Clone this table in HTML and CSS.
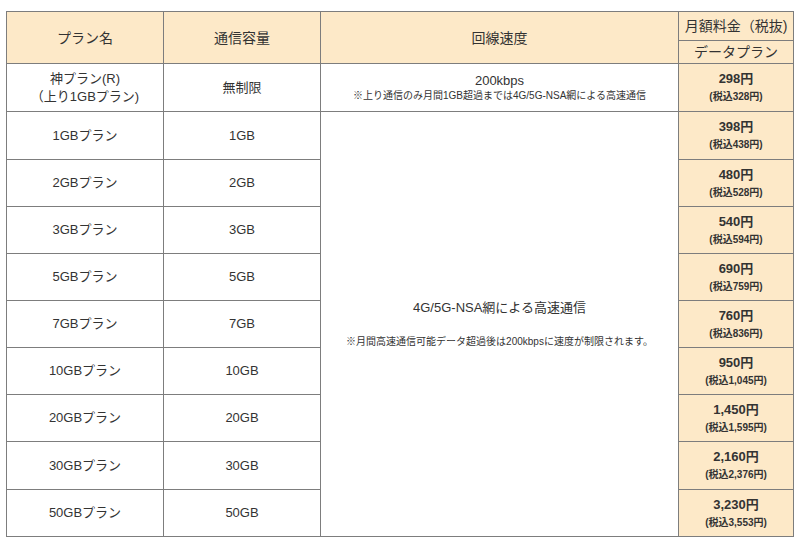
FILE: index.html
```html
<!DOCTYPE html>
<html lang="ja">
<head>
<meta charset="utf-8">
<link rel="stylesheet" href="styles.css">
</head>
<body>
<table class="plans">
  <colgroup>
    <col class="c-name">
    <col class="c-cap">
    <col class="c-speed">
    <col class="c-price">
  </colgroup>
  <thead>
    <tr class="h1">
      <th rowspan="2">プラン名</th>
      <th rowspan="2">通信容量</th>
      <th rowspan="2">回線速度</th>
      <th class="ph">月額料金（税抜)</th>
    </tr>
    <tr class="h2">
      <th class="ph">データプラン</th>
    </tr>
  </thead>
  <tbody>
    <tr class="first">
      <td>神プラン(R)<br>（上り1GBプラン)</td>
      <td>無制限</td>
      <td><div class="speed">200kbps</div><div class="note">※上り通信のみ月間1GB超過までは4G/5G-NSA網による高速通信</div></td>
      <td class="price"><div class="amt">298円</div><div class="tax">(税込328円)</div></td>
    </tr>
    <tr class="tall">
      <td>1GBプラン</td>
      <td>1GB</td>
      <td rowspan="9" class="big"><div class="speed2">4G/5G-NSA網による高速通信</div><div class="note2">※月間高速通信可能データ超過後は200kbpsに速度が制限されます。</div></td>
      <td class="price"><div class="amt">398円</div><div class="tax">(税込438円)</div></td>
    </tr>
    <tr>
      <td>2GBプラン</td>
      <td>2GB</td>
      <td class="price"><div class="amt">480円</div><div class="tax">(税込528円)</div></td>
    </tr>
    <tr>
      <td>3GBプラン</td>
      <td>3GB</td>
      <td class="price"><div class="amt">540円</div><div class="tax">(税込594円)</div></td>
    </tr>
    <tr>
      <td>5GBプラン</td>
      <td>5GB</td>
      <td class="price"><div class="amt">690円</div><div class="tax">(税込759円)</div></td>
    </tr>
    <tr>
      <td>7GBプラン</td>
      <td>7GB</td>
      <td class="price"><div class="amt">760円</div><div class="tax">(税込836円)</div></td>
    </tr>
    <tr>
      <td>10GBプラン</td>
      <td>10GB</td>
      <td class="price"><div class="amt">950円</div><div class="tax">(税込1,045円)</div></td>
    </tr>
    <tr>
      <td>20GBプラン</td>
      <td>20GB</td>
      <td class="price"><div class="amt">1,450円</div><div class="tax">(税込1,595円)</div></td>
    </tr>
    <tr class="tall">
      <td>30GBプラン</td>
      <td>30GB</td>
      <td class="price"><div class="amt">2,160円</div><div class="tax">(税込2,376円)</div></td>
    </tr>
    <tr>
      <td>50GBプラン</td>
      <td>50GB</td>
      <td class="price"><div class="amt">3,230円</div><div class="tax">(税込3,553円)</div></td>
    </tr>
  </tbody>
</table>
</body>
</html>
```

FILE: styles.css
```css
html, body {
  margin: 0;
  padding: 0;
  background: #fff;
}
body {
  padding: 11px 0 0 6px;
  font-family: "Liberation Sans", "Noto Sans CJK JP", sans-serif;
  color: #333;
  font-size: 13px;
}
.plans {
  border-collapse: collapse;
  table-layout: fixed;
  width: 787px;
}
.c-name { width: 157px; }
.c-cap { width: 157px; }
.c-speed { width: 358px; }
.c-price { width: 115px; }
.plans th, .plans td {
  border: 1px solid #7d7d7d;
  text-align: center;
  vertical-align: middle;
  padding: 0;
  line-height: 18px;
}
.plans th {
  background: #fde9c8;
  font-weight: normal;
  font-size: 14px;
}
.h1 { height: 29px; }
.h2 { height: 23px; }
.h2 th { line-height: 20px; }
.first { height: 48px; }
tbody tr { height: 47px; }
tbody tr.tall { height: 48px; }
.price {
  background: #fde9c8;
  font-weight: bold;
}
.amt {
  font-size: 13px;
  line-height: 18px;
}
.tax {
  font-size: 10px;
  line-height: 17px;
}
.speed { font-size: 13px; line-height: 17px; }
.note { font-size: 10px; line-height: 14px; }
.speed2 { font-size: 13px; line-height: 18px; }
.note2 { font-size: 10px; line-height: 14px; margin-top: 18px; }
```
